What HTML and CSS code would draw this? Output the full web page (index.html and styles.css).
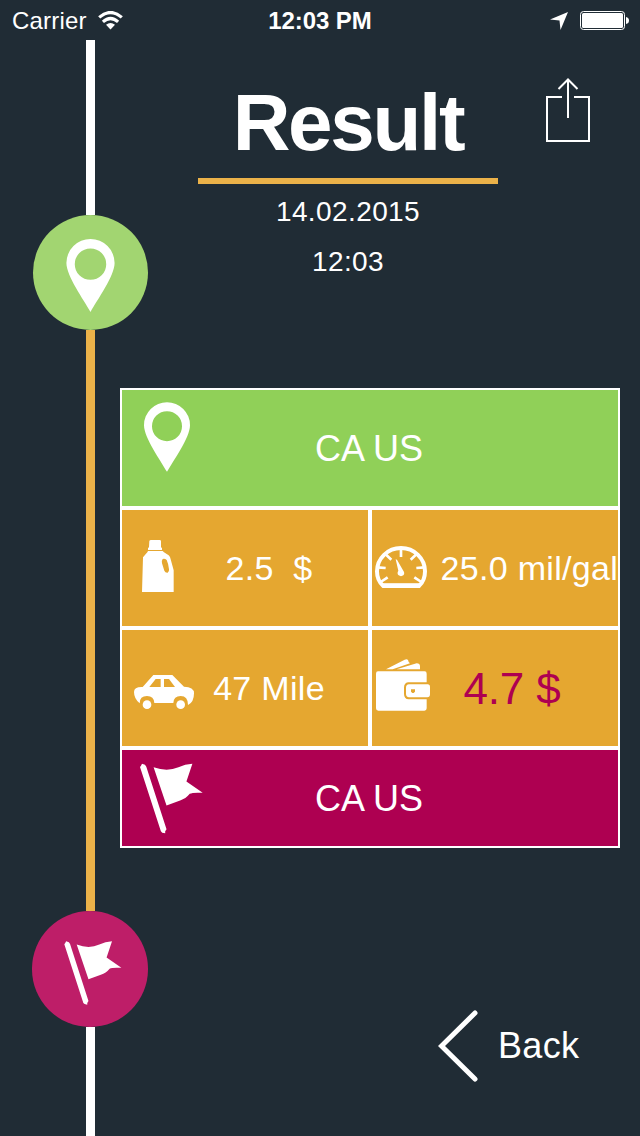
FILE: index.html
```html
<!DOCTYPE html>
<html lang="en">

<head>
  <meta charset="UTF-8" />
  <meta name="viewport" content="width=device-width, initial-scale=1.0" />
  <title>Result</title>
  <link rel="stylesheet" href="styles.css">
</head>

<body>
  <!-- shared icons -->
  <svg class="sprite" width="0" height="0">
    <symbol id="pin" viewBox="102 66 138 209">
      <path fill-rule="evenodd" d="M171 275C152 241 102 172 102 135A69 69 0 0 1 240 135C240 172 190 241 171 275ZM171 93a45 45 0 1 0 0 90a45 45 0 1 0 0-90Z" />
    </symbol>
    <symbol id="flag" viewBox="88 71 190 212">
      <path d="M88 82L91 78L94 72L103 75L107 81L168 270L164 276V282L155 280L151 276Z" />
      <path d="M129 83Q170 98 204 83Q224 73 246 72L228 126L277 160Q247 158 238 163Q226 178 209 183L168 198Z" />
    </symbol>
  </svg>

  <div class="status-bar">
    <div class="status-left">
      <span>Carrier</span>
      <svg width="25" height="19" viewBox="0 0 25 19">
        <path d="M1.2 6.4Q12.5-3.4 23.8 6.4M4.9 10.9Q12.5 4.1 20.1 10.9" fill="none" stroke="#fff" stroke-width="3.2" />
        <path d="M8 13.8Q12.5 10 17 13.8L12.5 18.4Z" />
      </svg>
    </div>
    <div class="status-time">12:03 PM</div>
    <div class="status-right">
      <svg width="18" height="18" viewBox="0 0 18 18">
        <path d="M18 0L10.5 18L9.5 8.4L0 7.5Z" />
      </svg>
      <svg width="49" height="19" viewBox="0 0 49 19">
        <rect x=".5" y=".5" width="44" height="18" rx="3" fill="none" stroke="#fff" />
        <rect x="2" y="2" width="41" height="15" rx="1.5" />
        <path d="M46 6Q49 6.5 49 9.5T46 13Z" />
      </svg>
    </div>
  </div>

  <main class="screen">
    <div class="timeline">
      <div class="line line-start"></div>
      <div class="stop stop-from">
        <svg class="stop-pin"><use href="#pin" /></svg>
      </div>
      <div class="line line-route"></div>
      <div class="stop stop-to">
        <svg class="stop-flag"><use href="#flag" /></svg>
      </div>
      <div class="line line-end"></div>
    </div>

    <div class="content">
      <header class="header">
        <div class="heading">
          <h1>Result</h1>
          <p>14.02.2015</p>
          <p>12:03</p>
        </div>
        <svg class="share" width="44" height="64" viewBox="0 0 44 64">
          <path d="M16 19H1V63H43V19H28M22 40V1.5M12.5 11L22 1.5L31.5 11" fill="none" stroke="#fff" stroke-width="2" />
        </svg>
      </header>

      <section class="table">
        <div class="row row-from">
          <svg class="row-pin"><use href="#pin" /></svg>
          <span>CA US</span>
        </div>

        <div class="cell">
          <div class="icon">
            <svg class="icon-bottle" width="32" height="52" viewBox="96 120 96 156">
              <path d="M118 123Q119 120 123 120H149Q153 120 153 124V142L156 144V150H114V144L117 142Z" />
              <path fill-rule="evenodd" d="M114 153H158L162 157L176 166Q181 171 182 178L191 211V276H96L99 172L112 157ZM158 177Q154 182 156 190L163 212Q166 219 173 218Q178 216 177 208Q175 190 170 180Q164 174 158 177Z" />
            </svg>
          </div>
          <span>2.5&nbsp; $</span>
        </div>

        <div class="cell cell-wide">
          <div class="icon">
            <svg class="icon-gauge" width="52" height="42" viewBox="45 138 156 126">
              <path d="M69 257H178Q195 241 195 214A72 70 0 0 0 51 214Q51 241 69 257Z" fill="none" stroke="#fff" stroke-width="12" />
              <path d="M67 250H180V264H67Z" />
              <path d="M123 146V171M76 162L94 179M170 162L152 179M52 202L77 204M194 202L169 204M62 246L83 232M184 246L163 232" fill="none" stroke="#fff" stroke-width="8" />
              <path d="M107 178L111 179L129 211Q136 220 130 226Q123 231 116 226Q110 220 115 212Z" />
            </svg>
          </div>
          <span>25.0 mil/gal</span>
        </div>

        <div class="cell">
          <div class="icon">
            <svg class="icon-car" width="60" height="34" viewBox="72 165 180 102">
              <path fill-rule="evenodd" d="M130 165H187L222 200Q252 200 252 220Q252 247 234 255Q234 228 212 228Q191 228 190 249H133Q132 228 111 228Q89 228 89 250Q72 236 72 216Q72 200 98 201ZM137 177L118 201H152V177ZM162 177V201H195L177 177Z" />
              <circle cx="111" cy="254" r="13" />
              <circle cx="212" cy="254" r="13" />
            </svg>
          </div>
          <span>47 Mile</span>
        </div>

        <div class="cell cell-total">
          <div class="icon">
            <svg class="icon-wallet" width="54" height="52" viewBox="48 116 162 156">
              <path d="M78 147L134 118Q141 115 144 119L146 125L150 129L98 147ZM110 147L170 129Q180 129 180 138V147Z" />
              <path d="M54 153H194Q200 153 200 160V186H144Q132 188 132 202V220Q132 236 146 237H200V264Q200 271 193 271H55Q48 271 48 264V160Q48 153 54 153Z" />
              <path fill-rule="evenodd" d="M147 192H203Q210 192 210 200V222Q210 231 202 231H147Q138 230 138 221V202Q138 193 147 192ZM153 207V214L157 218H161L165 214V207Z" />
            </svg>
          </div>
          <span>4.7 $</span>
        </div>

        <div class="row row-to">
          <svg class="row-flag"><use href="#flag" /></svg>
          <span>CA US</span>
        </div>
      </section>

      <a class="back">
        <svg width="40" height="72" viewBox="0 0 40 72">
          <path d="M37 3L3.5 36L37 69" fill="none" stroke="#fff" stroke-width="5" stroke-linecap="round" />
        </svg>
        <span>Back</span>
      </a>
    </div>
  </main>
</body>

</html>
```
FILE: styles.css
```css
* {
  box-sizing: border-box;
}

body {
  margin: 0;
  width: 640px;
  height: 1136px;
  overflow: hidden;
  display: flex;
  flex-direction: column;
  background-color: #202c35;
  color: #fff;
  font-family: "Liberation Sans", Helvetica, Arial, sans-serif;
}

svg {
  display: block;
  flex-shrink: 0;
  fill: #fff;
}

.sprite {
  position: absolute;
}

/* Status bar */
.status-bar {
  display: grid;
  grid-template-columns: 1fr auto 1fr;
  align-items: center;
  height: 40px;
  padding: 1px 12px 0 12px;
  font-size: 24px;
}

.status-left,
.status-right {
  display: flex;
  align-items: center;
  gap: 12px;
}

.status-left {
  letter-spacing: 0.2px;
  gap: 11px;
}

.status-right {
  justify-content: flex-end;
  margin-right: -1px;
}

.status-time {
  font-weight: bold;
  letter-spacing: -0.1px;
}

.screen {
  display: flex;
  flex: 1;
}

/* Route line on the left */
.timeline {
  display: flex;
  flex-direction: column;
  width: 120px;
}

.line {
  width: 9px;
  margin-left: 86px;
  background-color: #fff;
}

.line-start {
  height: 174.5px;
}

.line-route {
  height: 581px;
  background-color: #ebb249;
}

.line-end {
  flex: 1;
}

.stop {
  display: flex;
  justify-content: center;
  align-items: center;
  width: 115.5px;
  height: 115.5px;
  border-radius: 50%;
}

.stop-from {
  margin-left: 32.7px;
  padding-top: 7px;
  background-color: #a2d571;
}

.stop-to {
  margin-left: 32px;
  padding: 9px 0 0 6px;
  background-color: #be1e68;
}

.stop-pin {
  width: 49px;
  height: 73px;
}

.stop-flag {
  width: 58px;
  height: 64px;
}

.content {
  display: flex;
  flex-direction: column;
  flex: 1;
}

/* Header */
.header {
  display: flex;
  gap: 48px;
  height: 348px;
  padding: 32px 0 0 78px;
}

.heading {
  width: 300px;
  text-align: center;
}

.heading h1 {
  height: 112px;
  margin: 0 0 3px;
  padding-top: 1px;
  border-bottom: 6px solid #ebb249;
  font-size: 80px;
  line-height: 100px;
  letter-spacing: -2.3px;
}

.heading p {
  margin: 0;
  font-size: 28px;
  line-height: 50px;
  letter-spacing: 0.4px;
}

.share {
  margin-top: 6px;
}

/* Result table */
.table {
  display: grid;
  grid-template-columns: 246px 246px;
  grid-template-rows: 116px 116px 116px 96px;
  gap: 4px;
  width: 500px;
  padding: 2px;
  background-color: #fff;
}

.row {
  grid-column: span 2;
  display: grid;
  grid-template-columns: 87px 1fr 89px;
  align-items: center;
  font-size: 36px;
  text-align: center;
}

.row span {
  padding-top: 2px;
}

.row svg {
  align-self: start;
}

.row-from {
  background-color: #90d058;
}

.row-to {
  background-color: #ae0051;
}

.row-pin {
  width: 46px;
  height: 70px;
  margin: 12px 0 0 22px;
}

.row-flag {
  width: 63px;
  height: 71px;
  margin: 13px 0 0 18px;
}

.cell {
  display: flex;
  align-items: center;
  overflow: hidden;
  padding-right: 32px;
  background-color: #e5a730;
  font-size: 34px;
  letter-spacing: 0.3px;
  white-space: nowrap;
}

.cell span {
  flex: 1;
  text-align: center;
}

.icon {
  width: 80px;
}

.icon-bottle {
  margin: -4px 0 0 20px;
}

.icon-car {
  margin: 8px 0 0 12px;
}

.cell-wide {
  padding-right: 0;
}

.cell-wide span {
  text-align: left;
}

.cell-wide .icon {
  width: 69.5px;
}

.icon-gauge {
  margin: -2px 0 0 3px;
}

.cell-total {
  padding-right: 46px;
}

.cell-total span {
  padding-top: 2px;
  color: #ae0051;
  font-size: 44px;
  letter-spacing: -0.2px;
}

.icon-wallet {
  margin: -7px 0 0 4px;
}

/* Back button */
.back {
  display: flex;
  align-items: center;
  gap: 20px;
  margin: auto 0 54px 318px;
  font-size: 36px;
  letter-spacing: 0.3px;
}
```
